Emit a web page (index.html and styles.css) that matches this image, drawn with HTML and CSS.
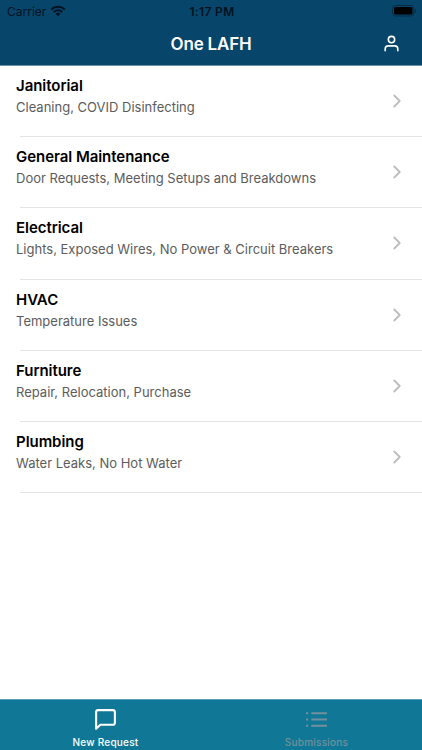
FILE: index.html
```html
<!DOCTYPE html>
<html lang="en">
    <head>
        <meta charset="UTF-8" />
        <meta name="viewport" content="width=device-width, initial-scale=1.0" />
        <title>One LAFH</title>
        <link rel="stylesheet" href="styles.css">
    </head>
    <body>
        <header>
            <div class="status">
                <div class="carrier">
                    <span>Carrier</span>
                    <svg class="wifi" viewBox="0 0 16 12">
                        <path d="M1.3 4.4a9.7 9.7 0 0 1 13.4 0M3.8 7a6.1 6.1 0 0 1 8.4 0" />
                        <path class="dot" d="M8 11.2 5.6 8.8a3.5 3.5 0 0 1 4.8 0z" />
                    </svg>
                </div>
                <span class="clock">1:17 PM</span>
                <svg class="battery" viewBox="0 0 25 12">
                    <rect class="shell" x=".5" y=".5" width="21.5" height="10.5" rx="3" />
                    <rect x="2" y="2" width="18.5" height="7.5" rx="1.5" />
                    <path class="cap" d="M23 4v4c1.6-.6 1.6-3.4 0-4z" />
                </svg>
            </div>
            <div class="navbar">
                <h1>One LAFH</h1>
                <svg class="icon user" viewBox="0 0 24 24">
                    <path d="M20 21v-2a4 4 0 0 0-4-4H8a4 4 0 0 0-4 4v2" />
                    <circle cx="12" cy="7" r="4" />
                </svg>
            </div>
        </header>
        <main>
            <ul class="list">
                <li>
                    <div class="item">
                        <h2>Janitorial</h2>
                        <p>Cleaning, COVID Disinfecting</p>
                    </div>
                    <svg class="icon arrow" viewBox="0 0 24 24"><path d="m9 18 6-6-6-6" /></svg>
                </li>
                <li>
                    <div class="item">
                        <h2>General Maintenance</h2>
                        <p>Door Requests, Meeting Setups and Breakdowns</p>
                    </div>
                    <svg class="icon arrow" viewBox="0 0 24 24"><path d="m9 18 6-6-6-6" /></svg>
                </li>
                <li>
                    <div class="item">
                        <h2>Electrical</h2>
                        <p>Lights, Exposed Wires, No Power &amp; Circuit Breakers</p>
                    </div>
                    <svg class="icon arrow" viewBox="0 0 24 24"><path d="m9 18 6-6-6-6" /></svg>
                </li>
                <li>
                    <div class="item">
                        <h2>HVAC</h2>
                        <p>Temperature Issues</p>
                    </div>
                    <svg class="icon arrow" viewBox="0 0 24 24"><path d="m9 18 6-6-6-6" /></svg>
                </li>
                <li>
                    <div class="item">
                        <h2>Furniture</h2>
                        <p>Repair, Relocation, Purchase</p>
                    </div>
                    <svg class="icon arrow" viewBox="0 0 24 24"><path d="m9 18 6-6-6-6" /></svg>
                </li>
                <li>
                    <div class="item">
                        <h2>Plumbing</h2>
                        <p>Water Leaks, No Hot Water</p>
                    </div>
                    <svg class="icon arrow" viewBox="0 0 24 24"><path d="m9 18 6-6-6-6" /></svg>
                </li>
            </ul>
        </main>
        <nav class="tabs">
            <a class="tab active">
                <svg class="icon" viewBox="0 0 24 24">
                    <path d="M21 15a2 2 0 0 1-2 2H7l-4 4V5a2 2 0 0 1 2-2h14a2 2 0 0 1 2 2z" />
                </svg>
                <span>New Request</span>
            </a>
            <a class="tab">
                <svg class="icon" viewBox="0 0 24 24">
                    <path d="M8 6h13M8 12h13M8 18h13M3 6h.01M3 12h.01M3 18h.01" />
                </svg>
                <span>Submissions</span>
            </a>
        </nav>
    </body>
</html>
```

FILE: styles.css
```css
* {
    box-sizing: border-box;
}
body {
    display: flex;
    flex-direction: column;
    height: 100vh;
    margin: 0;
    background-color: #fff;
    font-family: Inter, 'Liberation Sans', sans-serif;
}
h1,
h2,
p,
ul {
    margin: 0;
    padding: 0;
}
.icon {
    display: block;
    fill: none;
    stroke: currentColor;
    stroke-width: 2;
    stroke-linecap: round;
    stroke-linejoin: round;
}
header {
    height: 66px;
    background-color: #07456b;
    border-bottom: 1px solid #6d91a8;
}
.status {
    display: grid;
    grid-template-columns: 1fr auto 1fr;
    align-items: center;
    height: 22px;
    padding: 0 5px 0 7px;
    color: #03121f;
    font-size: 12px;
    letter-spacing: 0.35px;
}
.carrier {
    display: flex;
    align-items: center;
    gap: 4px;
    letter-spacing: 0;
}
.wifi {
    width: 16px;
    height: 12px;
    fill: none;
    stroke: #03121f;
    stroke-width: 2.1;
}
.wifi .dot {
    fill: #03121f;
    stroke: none;
}
.clock {
    font-weight: 600;
}
.battery {
    justify-self: end;
    width: 25px;
    height: 12px;
    fill: #000;
}
.battery .shell {
    fill: none;
    stroke: #052c47;
}
.battery .cap {
    fill: #052c47;
}
.navbar {
    display: grid;
    grid-template-columns: 1fr auto 1fr;
    align-items: center;
    height: 43px;
    padding: 0 21px;
    color: #fff;
}
.navbar h1 {
    grid-column: 2;
    font-size: 17px;
    font-weight: 600;
    letter-spacing: -0.2px;
}
.user {
    justify-self: end;
    width: 19px;
    height: 19px;
}
main {
    flex: 1;
}
.list {
    list-style: none;
}
.list li {
    display: flex;
    justify-content: space-between;
    height: 71.24px;
    padding: 10px 14px 0 16px;
    background: linear-gradient(#e4e4e6, #e4e4e6) 20px 100% / 100% 1px no-repeat;
}
.item h2 {
    color: #000;
    font-size: 15px;
    font-weight: 600;
    line-height: 20px;
    letter-spacing: -0.05px;
}
.item p {
    margin-top: 2px;
    color: #5c5c5c;
    font-size: 13px;
    line-height: 18px;
}
.arrow {
    width: 22px;
    height: 22px;
    margin-top: 14px;
    color: #bdbdc0;
}
.tabs {
    display: flex;
    height: 51px;
    background-color: #107896;
    border-top: 1px solid #5c9fb3;
}
.tab {
    display: flex;
    flex: 1;
    flex-direction: column;
    align-items: center;
    padding-top: 7px;
    color: #73909c;
    font-size: 10px;
    font-weight: 500;
    line-height: 12px;
    letter-spacing: 0.25px;
}
.tab .icon {
    width: 25px;
    height: 25px;
    margin-bottom: 4px;
    stroke-linecap: square;
}
.tab.active {
    color: #fff;
}
```
